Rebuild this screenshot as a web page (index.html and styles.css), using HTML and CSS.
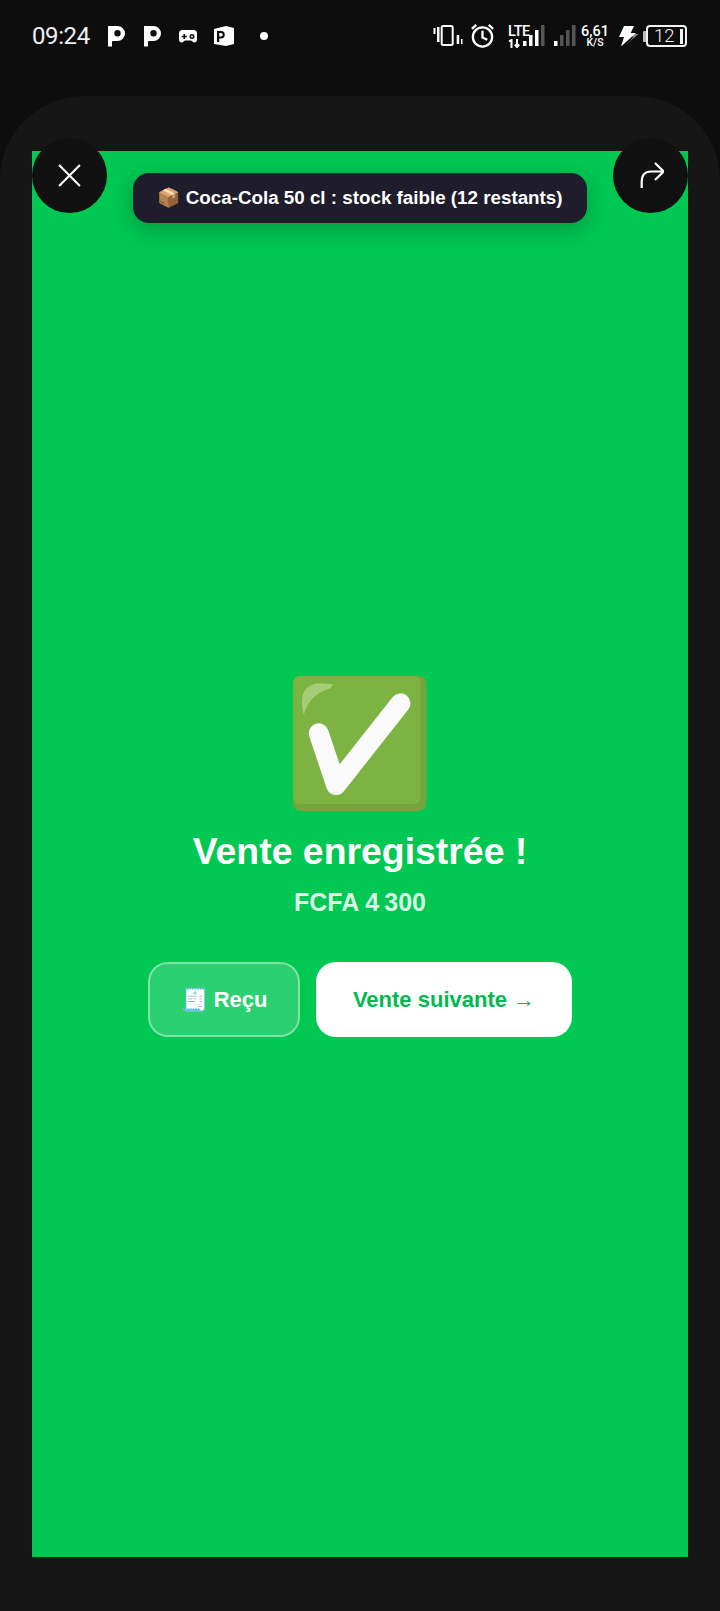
FILE: index.html
```html
<!DOCTYPE html>
<html lang="fr">
<head>
<meta charset="utf-8">
<title>Vente enregistrée</title>
<link rel="stylesheet" href="styles.css">
</head>
<body>
<header class="status">
  <div class="status-left">
    <span class="time">09:24</span>
    <svg class="ico p1" viewBox="0 0 18 22"><path fill="#fff" fill-rule="evenodd" d="M1 1h9.500a7.500 7.500 0 0 1 0 15H6l-1 .5V21.500H1zM10.500 5a3.200 3.200 0 1 0 0 6.400 3.200 3.200 0 0 0 0-6.400z"/></svg>
    <svg class="ico p2" viewBox="0 0 18 22"><path fill="#fff" fill-rule="evenodd" d="M1 1h9.500a7.500 7.500 0 0 1 0 15H6l-1 .5V21.500H1zM10.500 5a3.200 3.200 0 1 0 0 6.400 3.200 3.200 0 0 0 0-6.400z"/></svg>
    <svg class="ico game" viewBox="0 0 18 13"><path fill="#fff" fill-rule="evenodd" d="M3.500 0h11A3.500 3.500 0 0 1 18 3.500V10a2.500 2.500 0 0 1-4.500 1.500L12 10.500H6l-1.500 1A2.500 2.500 0 0 1 0 10V3.500A3.500 3.500 0 0 1 3.500 0zM4.500 4v1.700H2.800v1.600h1.700V9h1.600V7.300h1.700V5.700H6.100V4zm8.500 0a2.500 2.500 0 1 0 0 5 2.500 2.500 0 0 0 0-5zm0 1.500a1 1 0 1 1 0 2 1 1 0 0 1 0-2z"/></svg>
    <svg class="ico office" viewBox="0 0 20 20"><path fill="#fff" fill-rule="evenodd" d="M12 0l8 2v16l-8 2-12-2V3zM3 5v11h2.200v-3.500H7a3.700 3.700 0 0 0 0-7.500zm2.200 2H7a1.700 1.700 0 0 1 0 3.500H5.200z"/></svg>
    <span class="dot"></span>
  </div>
  <div class="status-right">
    <svg class="ico vib" viewBox="0 0 30 22"><rect x="8.700" y="1" width="11" height="19" rx="1.500" fill="none" stroke="#fff" stroke-width="2"/><g fill="#fff"><rect x="0.500" y="3" width="2" height="6"/><rect x="4" y="2" width="2.500" height="15"/><rect x="23.700" y="10" width="2.500" height="9"/><rect x="28" y="14" width="1.500" height="5"/></g></svg>
    <svg class="ico alarm" viewBox="0 0 26 26"><g fill="none" stroke="#fff" stroke-width="2.400"><circle cx="13" cy="14.500" r="10"/><path d="M13 8v7l5 2.500M2 6l4.500-4M24 6l-4.500-4"/></g></svg>
    <span class="lte"><b>LTE</b><svg class="lte-arrows" viewBox="0 0 14 9"><path d="M1 2.500L3.500 1v8M9 0v8M6.800 5.500L9 8l2.200-2.500" fill="none" stroke="#fff" stroke-width="2"/></svg></span>
    <svg class="ico sig1" viewBox="0 0 22 22"><g fill="#fff"><rect x="0" y="16" width="3.500" height="5"/><rect x="6" y="10" width="3.500" height="11"/><rect x="12" y="5" width="3.500" height="16"/></g><rect x="18" y="0" width="3.500" height="21" fill="#555"/></svg>
    <svg class="ico sig2" viewBox="0 0 22 22"><rect x="0" y="16" width="3.500" height="5" fill="#fff"/><g fill="#555"><rect x="6" y="10" width="3.500" height="11"/><rect x="12" y="5" width="3.500" height="16"/><rect x="18" y="0" width="3.500" height="21"/></g></svg>
    <span class="speed">6,61<br>K/S</span>
    <svg class="ico bolt" viewBox="0 0 20 21"><path fill="#8a8a8a" d="M14 8h5.500L5 20.500l8.500-8z"/><path fill="#fff" d="M5 0h10l-3.300 7H17L2 20.500 5 11H0z"/></svg>
    <span class="batt-nub"></span>
    <span class="batt"><span class="batt-num">12</span><span class="batt-bar"></span></span>
  </div>
</header>

<main class="sheet">
  <section class="screen">
    <div class="top-row">
      <button class="round" aria-label="Fermer">
        <svg viewBox="0 0 24 24" class="round-ico"><path d="M2 2l20 20M22 2L2 22" fill="none" stroke="#fff" stroke-width="2"/></svg>
      </button>
      <div class="toast">📦 Coca-Cola 50 cl : stock faible (12 restants)</div>
      <button class="round" aria-label="Partager">
        <svg viewBox="0 0 26 28" class="share"><path d="M3.700 26V20C3.700 13.500 7 9.500 13 9.500H25M17 1l8.700 8.500L17 18" fill="none" stroke="#fff" stroke-width="2.200"/></svg>
      </button>
    </div>
    <div class="center">
      <svg class="check" viewBox="0 0 400 405" role="img" aria-label="Validé">
        <rect width="400" height="405" rx="22" fill="#74a53d"/>
        <rect width="382" height="384" rx="20" fill="#7cb342"/>
        <path d="M32 117Q25 90 27 70Q30 27 77 22L117 24Q122 36 97 42Q47 62 32 117Z" fill="#a5cd78"/>
        <path d="M77 172L129 327L322 82" fill="none" stroke="#fafafa" stroke-width="60" stroke-linecap="round" stroke-linejoin="round"/>
      </svg>
      <h1 class="title">Vente enregistrée !</h1>
      <p class="amount">FCFA 4&#8239;300</p>
      <div class="actions">
        <button class="btn btn-ghost">🧾 Reçu</button>
        <button class="btn btn-white">Vente suivante →</button>
      </div>
    </div>
  </section>
</main>
</body>
</html>
```

FILE: styles.css
```css
* { box-sizing: border-box; }
html, body { margin: 0; padding: 0; }
body {
  width: 720px;
  height: 1611px;
  background: #0d0d0e;
  font-family: "Liberation Sans", Arial, sans-serif;
  overflow: hidden;
  display: flex;
  flex-direction: column;
}

.status {
  height: 96px;
  flex: none;
  padding: 20px 33px 0 32px;
  display: flex;
  justify-content: space-between;
  align-items: flex-start;
  color: #fff;
}
.status-left, .status-right { display: flex; align-items: center; height: 32px; }
.time { font: 400 24px Roboto, sans-serif; letter-spacing: -.4px; width: 60px; color: #f0f0f0; }
.ico { display: block; flex: none; }
.p1 { width: 18px; height: 22px; margin-left: 15px; }
.p2 { width: 18px; height: 22px; margin-left: 18px; }
.game { width: 18px; height: 13px; margin-left: 18px; }
.office { width: 20px; height: 20px; margin-left: 17px; }
.dot { width: 8px; height: 8px; border-radius: 50%; background: #fff; margin-left: 26px; }

.vib { width: 30px; height: 22px; }
.alarm { width: 25px; height: 25px; margin-left: 7px; margin-top: -2px; }
.lte { display: flex; flex-direction: column; margin-left: 13px; width: 22px; }
.lte b { font: 500 14.500px/14px Roboto, sans-serif; letter-spacing: -.4px; }
.lte-arrows { width: 14px; height: 9px; display: block; }
.sig1 { width: 22px; height: 22px; margin-left: -7px; margin-top: -1px; }
.sig2 { width: 22px; height: 22px; margin-left: 9px; margin-top: -1px; }
.speed {
  display: block;
  width: 28px;
  margin-left: 5px;
  text-align: center;
  font: 500 10.500px/10px Roboto, sans-serif;
}
.speed::first-line { font-size: 14.500px; line-height: 13px; }
.bolt { width: 20px; height: 21px; margin-left: 10px; }
.batt-nub { width: 3px; height: 11px; background: #bbb; margin-left: 3.500px; border-radius: 1px 0 0 1px; }
.batt {
  width: 41px; height: 22px; margin-left: .5px;
  border: 2px solid #f2f2f2; border-radius: 4px;
  display: flex; align-items: center; justify-content: flex-end; padding-right: 2px;
}
.batt-num { font: 300 18.500px/1 Roboto, sans-serif; margin-right: 5px; color: #f6f6f6; }
.batt-bar { width: 3.500px; height: 15px; background: #f2f2f2; }

.sheet {
  flex: 1;
  background: #161616;
  border-radius: 84px 84px 0 0;
  padding: 55px 32px 54px;
  display: flex;
}
.screen {
  flex: 1;
  background: #00c853;
  display: flex;
  flex-direction: column;
  position: relative;
}
.top-row {
  display: flex;
  justify-content: space-between;
  align-items: flex-start;
  margin-top: -13px;
  height: 75px;
}
.round {
  width: 75px; height: 75px;
  border-radius: 50%;
  border: 0;
  padding: 0;
  background: #111112;
  display: flex;
  align-items: center;
  justify-content: center;
}
.round-ico { width: 25px; height: 25px; }
.share { width: 26px; height: 28px; }
.toast {
  position: absolute;
  left: 50%;
  top: 22px;
  transform: translateX(-50%);
  height: 50px;
  width: 454px;
  border-radius: 16px;
  background: #1f1c2b;
  color: #fff;
  font-size: 18.800px;
  font-weight: 700;
  line-height: 50px;
  text-align: center;
  white-space: nowrap;
  box-shadow: 0 6px 24px rgba(0, 0, 0, .25);
}
.center {
  display: flex;
  flex-direction: column;
  align-items: center;
  padding-top: 463px;
}
.check {
  display: block;
  width: 133.500px;
  height: 135px;
  flex: none;
}
.title {
  margin: 16px 0 0;
  font-size: 37.400px;
  line-height: 48px;
  font-weight: 700;
  color: #fff;
}
.amount {
  margin: 10px 0 0;
  font-size: 25px;
  line-height: 34px;
  font-weight: 700;
  color: rgba(255, 255, 255, .85);
}
.actions {
  display: flex;
  gap: 16px;
  margin-top: 43px;
}
.btn {
  height: 75px;
  border-radius: 20px;
  font-family: inherit;
  font-size: 22px;
  font-weight: 700;
  white-space: nowrap;
}
.btn-ghost {
  width: 152px;
  border: 2px solid rgba(255, 255, 255, .4);
  background: rgba(255, 255, 255, .17);
  color: #fff;
}
.btn-white {
  width: 256px;
  border: 0;
  background: #fff;
  color: #00b94f;
}
```
